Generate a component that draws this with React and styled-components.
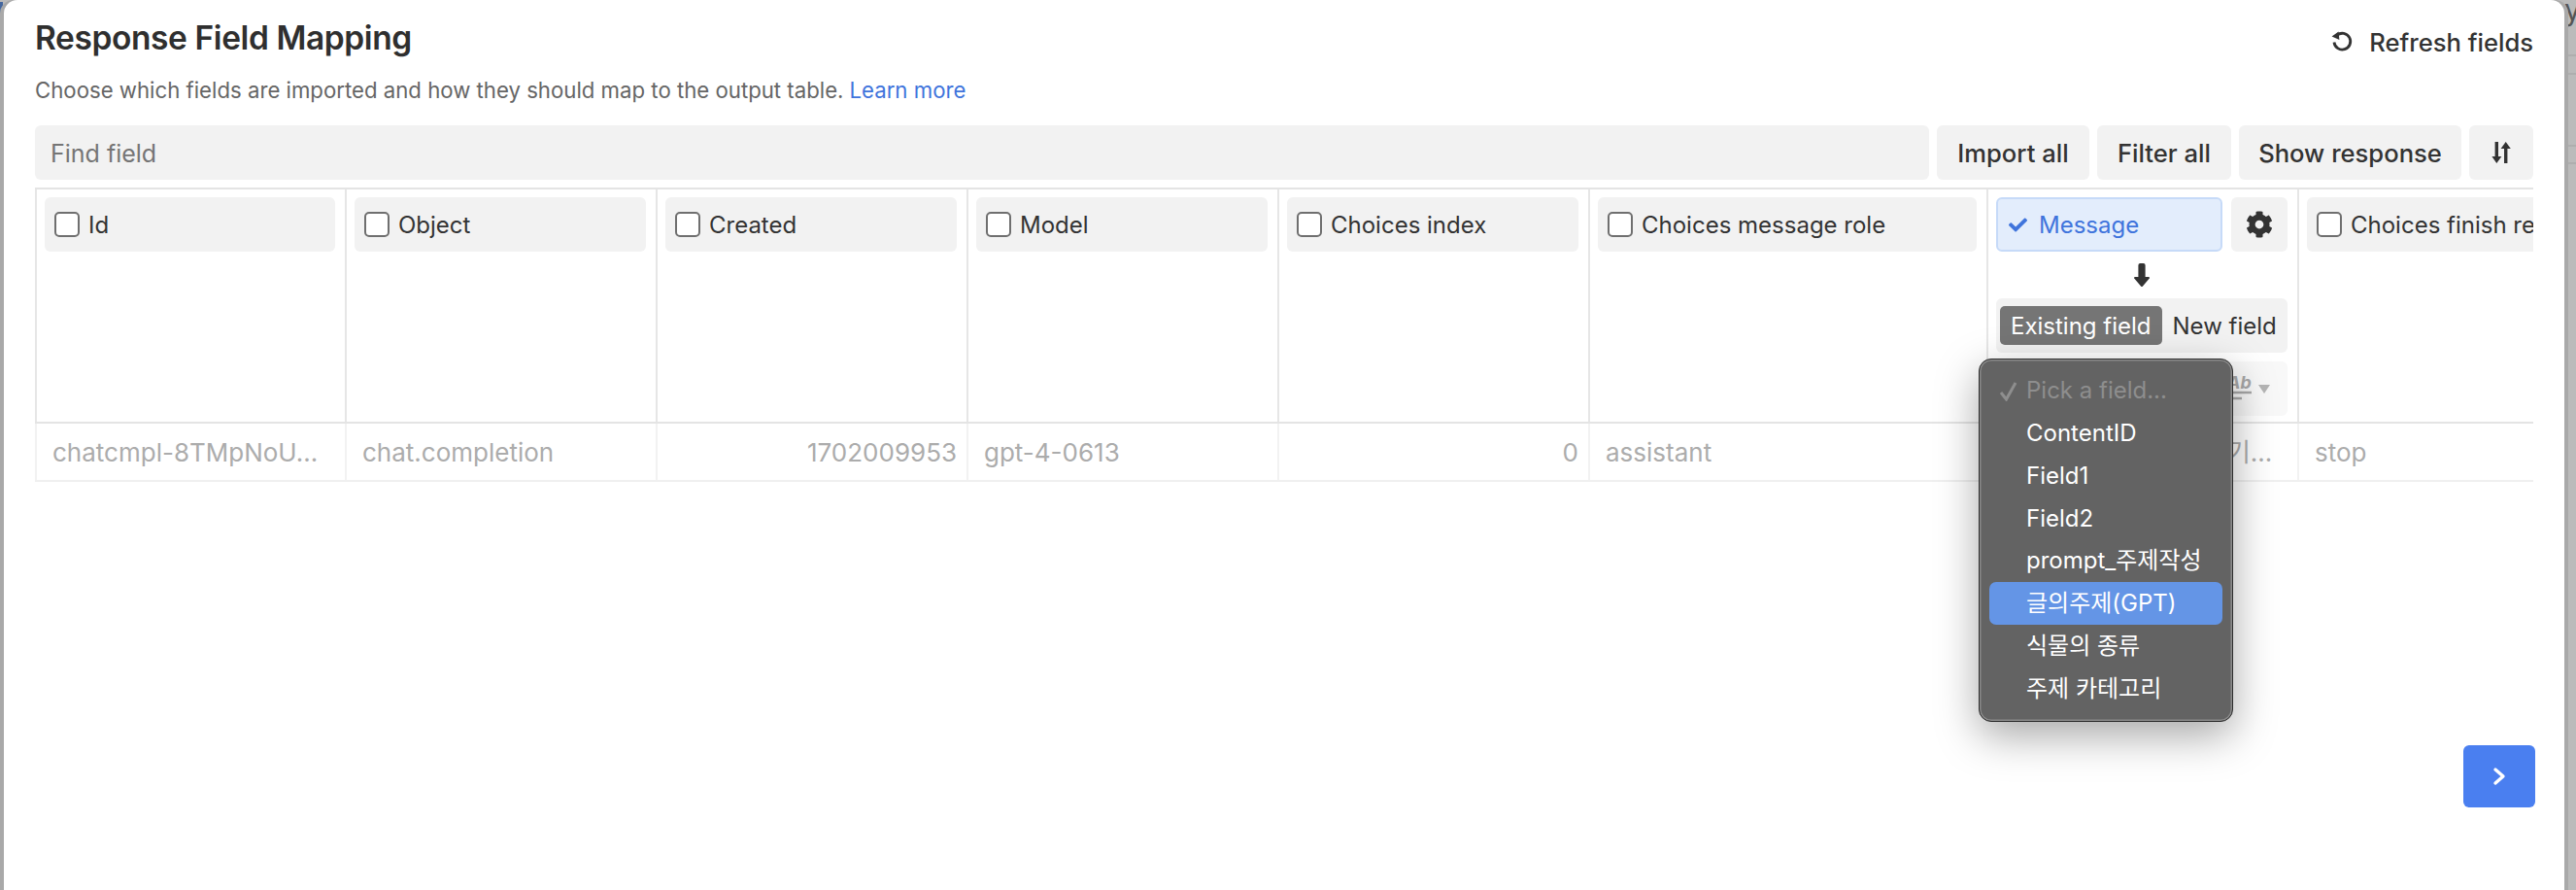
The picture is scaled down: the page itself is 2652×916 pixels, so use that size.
import React from "react";
import styled, { createGlobalStyle } from "styled-components";
import { FaCog, FaCheck } from "react-icons/fa";

const GlobalStyle = createGlobalStyle`
  html, body {
    margin: 0;
    padding: 0;
    height: 916px;
    overflow: hidden;
    background: #bbbbbb;
    font-family: Inter, "Noto Sans CJK KR", "Liberation Sans", sans-serif;
    color: #333333;
  }
`;

const Page = styled.div`
  position: relative;
  width: 2652px;
  height: 916px;
  overflow: hidden;
  padding-left: 4px;
  box-sizing: border-box;
`;

const BackdropLine = styled.div`
  position: absolute;
  left: 0;
  right: 0;
  top: ${(p) => p.$top}px;
  height: 2px;
  background: #aeaeae;
`;

const BackdropMark = styled.div`
  position: absolute;
  left: 0;
  top: ${(p) => p.$top}px;
  width: 3px;
  height: ${(p) => p.$height}px;
  background: ${(p) => p.$color};
`;

const BackdropLetter = styled.span`
  position: absolute;
  left: 2640px;
  top: -8px;
  font-size: 30px;
  color: #555555;
`;

const Modal = styled.div`
  position: relative;
  width: 2636px;
  height: 916px;
  box-sizing: border-box;
  padding: 0 32px 85px;
  background: #ffffff;
  border-radius: 14px 14px 0 0;
  box-shadow: 4px 0 0 #a9a9a9, -4px 0 0 #a9a9a9;
  display: flex;
  flex-direction: column;
`;

const TitleRow = styled.div`
  display: flex;
  align-items: center;
  justify-content: space-between;
  height: 38px;
  margin-top: 20px;
`;

const Title = styled.h1`
  margin: 0;
  font-size: 33.5px;
  font-weight: 600;
  letter-spacing: -0.4px;
  color: #2f2f2f;
`;

const RefreshButton = styled.button`
  display: flex;
  align-items: center;
  gap: 16px;
  margin-top: 8px;
  padding: 0;
  border: 0;
  background: none;
  font: inherit;
  font-size: 25.6px;
  font-weight: 500;
  color: #333333;
`;

const Subtitle = styled.p`
  margin: 19px 0 0;
  font-size: 22.2px;
  line-height: 32px;
  color: #666666;
`;

const LearnMore = styled.a`
  color: #3f74dc;
  margin-left: 6px;
`;

const Toolbar = styled.div`
  display: flex;
  gap: 8px;
  height: 56px;
  margin-top: 20px;
`;

const SearchBox = styled.div`
  flex: 1;
  display: flex;
  align-items: center;
  padding: 1px 0 0 16px;
  background: #f2f2f2;
  border-radius: 6px;
  font-size: 25px;
  color: #757575;
`;

const ToolButton = styled.button`
  width: ${(p) => p.$width}px;
  padding: 0;
  border: 0;
  border-radius: 6px;
  background: #f2f2f2;
  font: inherit;
  font-size: 25.6px;
  font-weight: 500;
  color: #333333;
  display: flex;
  align-items: center;
  justify-content: center;
`;

const TableWrap = styled.div`
  position: relative;
  margin-top: 8px;
`;

const TableClip = styled.div`
  overflow: hidden;
`;

const HeaderRow = styled.div`
  display: flex;
  height: 243px;
  border-top: 2px solid #e4e4e4;
  border-bottom: 2px solid #e4e4e4;
  box-sizing: border-box;
`;

const HeaderCell = styled.div`
  flex: none;
  width: ${(p) => p.$width}px;
  box-sizing: border-box;
  border-left: 2px solid #e6e6e6;
  padding: 8px 10px 0 8px;
  display: flex;
  flex-direction: column;
`;

const FieldChip = styled.label`
  flex: none;
  display: flex;
  align-items: center;
  gap: 9px;
  height: 56px;
  box-sizing: border-box;
  padding-left: 10px;
  background: #f2f2f2;
  border-radius: 6px;
  font-size: 24px;
  color: #333333;
  white-space: nowrap;
`;

const Checkbox = styled.span`
  flex: none;
  width: 26px;
  height: 26px;
  box-sizing: border-box;
  border: 2px solid #6f6f6f;
  border-radius: 5px;
  background: #ffffff;
`;

const ChipRow = styled.div`
  display: flex;
  gap: 9px;
`;

const ActiveChip = styled.div`
  flex: 1;
  display: flex;
  align-items: center;
  gap: 12px;
  height: 56px;
  box-sizing: border-box;
  padding-left: 11px;
  background: #e3edfc;
  border: 2px solid #c6daf8;
  border-radius: 6px;
  font-size: 24px;
  color: #3f74dc;
`;

const GearButton = styled.div`
  flex: none;
  width: 58px;
  height: 56px;
  display: flex;
  align-items: center;
  justify-content: center;
  background: #f2f2f2;
  border-radius: 6px;
  color: #333333;
`;

const ArrowSlot = styled.div`
  height: 48px;
  display: flex;
  align-items: center;
  justify-content: center;
`;

const Segmented = styled.div`
  display: flex;
  align-items: center;
  height: 56px;
  box-sizing: border-box;
  padding: 0 4px;
  background: #f2f2f2;
  border-radius: 6px;
  font-size: 24px;
  white-space: nowrap;
`;

const Segment = styled.div`
  flex: none;
  height: 40px;
  display: flex;
  align-items: center;
  padding: 0 11px;
  border-radius: 5px;
  background: ${(p) => (p.$active ? "#757575" : "transparent")};
  color: ${(p) => (p.$active ? "#ffffff" : "#333333")};
`;

const TypeRow = styled.div`
  display: flex;
  align-items: center;
  justify-content: flex-end;
  gap: 7px;
  height: 56px;
  margin-top: 9px;
  padding-right: 18px;
  background: #f8f8f8;
  border-radius: 6px;
`;

const DataRow = styled.div`
  display: flex;
  height: 60px;
  border-bottom: 2px solid #f0f0f0;
  box-sizing: border-box;
`;

const DataCell = styled.div`
  flex: none;
  width: ${(p) => p.$width}px;
  box-sizing: border-box;
  border-left: 2px solid #f2f2f2;
  padding: 2px 10px 0 16px;
  line-height: 56px;
  font-size: 26px;
  color: #acacac;
  text-align: ${(p) => (p.$numeric ? "right" : "left")};
  white-space: nowrap;
  overflow: hidden;
  text-overflow: ellipsis;
`;

const Popup = styled.div`
  position: absolute;
  left: 2001px;
  top: 176px;
  width: 262px;
  height: 374px;
  box-sizing: border-box;
  padding: 10px 10px;
  background: #636363;
  border: 1px solid #2c2c2c;
  border-radius: 13px;
  box-shadow: inset 0 0 0 1.5px #8a8a8a, 0 14px 44px rgba(0, 0, 0, 0.35);
`;

const PopupItem = styled.div`
  position: relative;
  height: 43.85px;
  line-height: 43.85px;
  padding-left: 38px;
  border-radius: 7px;
  font-size: 24px;
  white-space: nowrap;
  background: ${(p) => (p.$selected ? "#6495e6" : "transparent")};
  color: ${(p) => (p.$muted ? "#8e8e8e" : "#ffffff")};
`;

const PickedMark = styled.svg`
  position: absolute;
  left: 10px;
  top: 13px;
`;

const Footer = styled.div`
  margin-top: auto;
  margin-right: -2px;
  display: flex;
  justify-content: flex-end;
`;

const NextButton = styled.button`
  width: 74px;
  height: 64px;
  padding: 0;
  border: 0;
  border-radius: 6px;
  background: #4a7ff0;
  display: flex;
  align-items: center;
  justify-content: center;
`;

const columns = [
  { label: "Id", width: 319, value: "chatcmpl-8TMpNoU..." },
  { label: "Object", width: 320, value: "chat.completion" },
  { label: "Created", width: 320, value: "1702009953", numeric: true },
  { label: "Model", width: 320, value: "gpt-4-0613" },
  { label: "Choices index", width: 320, value: "0", numeric: true },
  { label: "Choices message role", width: 410, value: "assistant" },
];

const fieldOptions = ["ContentID", "Field1", "Field2", "prompt_주제작성", "글의주제(GPT)", "식물의 종류", "주제 카테고리"];

function RefreshIcon() {
  return (
    <svg width="24" height="24" viewBox="0 0 24 24" fill="none" stroke="#333" strokeWidth="2.8">
      <path d="M7 5.2A8.4 8.4 0 1 1 4 12.5" />
      <path d="M1.6 6.6 8.6 1.6 9.4 10Z" fill="#333" stroke="none" />
    </svg>
  );
}

function SortIcon() {
  return (
    <svg width="20" height="26" viewBox="0 0 20 26" fill="#333">
      <path d="M3.6 2h3.4v15h3.4L5.3 24 .4 17h3.2z" />
      <path d="M13 24h3.4V9h3.4L14.7 2 9.6 9H13z" />
    </svg>
  );
}

function MapArrow() {
  return (
    <svg width="16" height="24" viewBox="0 0 16 24" fill="#333">
      <path d="M4.4 2a2 2 0 0 1 2-2h3.2a2 2 0 0 1 2 2v12H15a1 1 0 0 1 .8 1.6L9 23.4a1.3 1.3 0 0 1-2 0L.2 15.6A1 1 0 0 1 1 14h3.4z" />
    </svg>
  );
}

function TextTypeIcon() {
  return (
    <svg width="26" height="28" viewBox="0 0 26 28" fill="none" stroke="#a8a8a8" strokeWidth="2.6">
      <text x="1" y="14" fontSize="18" fontWeight="700" fontStyle="italic" fill="#a8a8a8" stroke="none">Ab</text>
      <path d="M0 18h26M0 24h16" />
    </svg>
  );
}

function Chevron() {
  return (
    <svg width="14" height="20" viewBox="0 0 14 20" fill="none" stroke="#fff" strokeWidth="3.4" strokeLinecap="round" strokeLinejoin="round">
      <path d="M3 3l8 7-8 7" />
    </svg>
  );
}

export default function App() {
  return (
    <Page>
      <GlobalStyle />
      <BackdropLine $top={56} />
      <BackdropLine $top={75} />
      <BackdropLine $top={149} />
      <BackdropLine $top={167} />
      <BackdropMark $top={2} $height={12} $color="#44679f" />
      <BackdropMark $top={24} $height={4} $color="#3569c4" />
      <BackdropMark $top={34} $height={11} $color="#5f84c4" />
      <BackdropLetter>y</BackdropLetter>
      <Modal>
        <TitleRow>
          <Title>Response Field Mapping</Title>
          <RefreshButton>
            <RefreshIcon />
            Refresh fields
          </RefreshButton>
        </TitleRow>
        <Subtitle>
          Choose which fields are imported and how they should map to the output table.
          <LearnMore>Learn more</LearnMore>
        </Subtitle>
        <Toolbar>
          <SearchBox>Find field</SearchBox>
          <ToolButton $width={157}>Import all</ToolButton>
          <ToolButton $width={138}>Filter all</ToolButton>
          <ToolButton $width={229}>Show response</ToolButton>
          <ToolButton $width={66}><SortIcon /></ToolButton>
        </Toolbar>
        <TableWrap>
          <TableClip>
            <HeaderRow>
              {columns.map((col) => (
                <HeaderCell key={col.label} $width={col.width}>
                  <FieldChip><Checkbox />{col.label}</FieldChip>
                </HeaderCell>
              ))}
              <HeaderCell $width={320}>
                <ChipRow>
                  <ActiveChip><FaCheck size={19} />Message</ActiveChip>
                  <GearButton><FaCog size={28} /></GearButton>
                </ChipRow>
                <ArrowSlot><MapArrow /></ArrowSlot>
                <Segmented>
                  <Segment $active>Existing field</Segment>
                  <Segment>New field</Segment>
                </Segmented>
                <TypeRow>
                  <TextTypeIcon />
                  <svg width="12" height="9" viewBox="0 0 12 9" fill="#b5b5b5"><path d="M0 0h12L6 9z" /></svg>
                </TypeRow>
              </HeaderCell>
              <HeaderCell $width={400}>
                <FieldChip><Checkbox />Choices finish reason</FieldChip>
              </HeaderCell>
            </HeaderRow>
            <DataRow>
              {columns.map((col) => (
                <DataCell key={col.label} $width={col.width} $numeric={col.numeric}>{col.value}</DataCell>
              ))}
              <DataCell $width={320}>식물의주제 관한 이야기모음</DataCell>
              <DataCell $width={400}>stop</DataCell>
            </DataRow>
          </TableClip>
          <Popup>
            <PopupItem $muted>
              <PickedMark width="20" height="20" viewBox="0 0 20 20" fill="none" stroke="#8e8e8e" strokeWidth="3">
                <path d="M2 11l5.5 7L17 1" />
              </PickedMark>
              Pick a field...
            </PopupItem>
            {fieldOptions.map((name) => (
              <PopupItem key={name} $selected={name === "글의주제(GPT)"}>{name}</PopupItem>
            ))}
          </Popup>
        </TableWrap>
        <Footer>
          <NextButton><Chevron /></NextButton>
        </Footer>
      </Modal>
    </Page>
  );
}
